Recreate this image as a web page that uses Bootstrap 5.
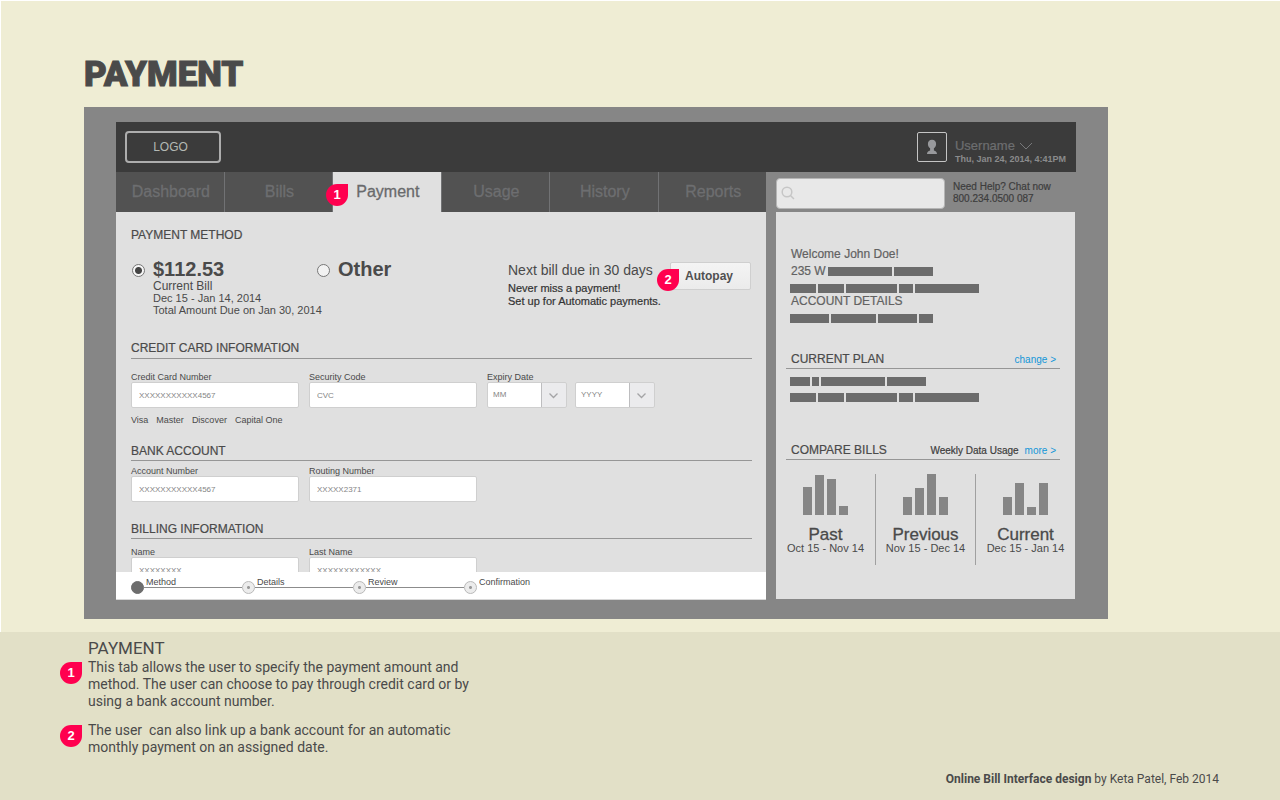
<!DOCTYPE html>
<html lang="en">
<head>
<meta charset="utf-8">
<meta name="viewport" content="width=device-width, initial-scale=1">
<title>Online Bill Interface – Payment</title>
<link href="https://cdn.jsdelivr.net/npm/bootstrap@5.3.0/dist/css/bootstrap.min.css" rel="stylesheet">
<style>
  :root { --ink:#4a4a4a; --panel:#e0e0e0; --frame:#868686; --pin:#ff004f; --rule:#969696; --sans:"Liberation Sans", Arial, sans-serif; --din:Roboto, "Open Sans", sans-serif; }
  body { font-family:var(--sans); font-size:12px; line-height:16px; color:var(--ink); background:#e2e0c7; }
  h1,h2,h3,p,ul,ol { margin:0; padding:0; }
  h1,h2,h3 { color:inherit; }
  ul,ol { list-style:none; }
  .stage { background:#efedd4; border-top:1px solid #fff; border-left:1px solid #fff; padding:54px 172px 13px 83px; }
  .page-title { font:900 35px/40px var(--din); margin-bottom:12px; -webkit-text-stroke:1px; }
  .frame { background:var(--frame); padding:15px 32px 19px; }
  .topbar { background:#3b3b3b; height:50px; padding:0 10px 0 9px; }
  .logo-box { width:96px; height:32px; border:2px solid #adadad; border-radius:4px; color:#b4b9b4; font-size:12px; line-height:29px; text-align:center; padding-right:5px; text-decoration:none; }
  .avatar { width:30px; height:30px; border:1px solid #c4c4c4; border-radius:2px; }
  .user-info { padding-top:10px; }
  .user-menu { color:#6d6e70; font-size:13px; line-height:14px; border:0; background:none; padding:0; text-align:left; -webkit-text-stroke:.2px; }
  .user-time { color:#8a8b8c; font-size:9px; font-weight:700; line-height:13px; }
  .workspace { display:grid; grid-template-columns:minmax(0,1fr) 300px; column-gap:10px; }
  .tabs { height:40px; background:#525252; }
  .tabs .nav-item + .nav-item { border-left:1px solid #717274; }
  .tabs .nav-link { color:#6d6e70; font-size:16px; line-height:39px; padding:0 0 0 2px; height:40px; border-radius:0; -webkit-text-stroke:.3px; }
  .tabs .nav-link.active { background:var(--panel); color:#696a6c; }
  .pin { width:22px; height:22px; border-radius:50% 0 50% 50%; background:var(--pin); color:#fff; font:700 13px/21px var(--sans); text-align:center; }
  .pin-tab { position:absolute; left:-7px; top:12px; z-index:2; }
  .pin-btn { position:absolute; left:-13px; top:7px; }
  .form-pane { background:var(--panel); max-height:360px; overflow:hidden; padding:13px 14px 0 15px; }
  .group-title { font-size:12px; line-height:20px; font-weight:400; -webkit-text-stroke:.2px; }
  .ruled { border-bottom:1px solid var(--rule); }
  .options { margin:13px 1px 22px 0; }
  .pay-choice { width:185px; }
  .pay-choice .form-check-input { float:none; width:13px; height:13px; margin:6px 0 0 1px; border:1px solid #777; background:#f2f2f2; flex:none; }
  .pay-choice .form-check-input:checked { background:radial-gradient(circle,#444 0 3px,#f6f6f6 4px); }
  .amount { font-size:20px; font-weight:700; line-height:22px; display:block; }
  .info { font-size:11px; line-height:12px; white-space:nowrap; }
  .due-note { width:162px; white-space:nowrap; }
  .due { font-size:14px; line-height:24px; }
  .due-hint { font-size:11px; line-height:13px; color:#333; -webkit-text-stroke:.2px; }
  .autopay { width:81px; height:28px; padding:0 3px 0 0; border:1px solid #cfcfcf; border-radius:2px; background:linear-gradient(#f4f4f4,#ebebeb); color:#505050; font-size:12px; font-weight:700; line-height:26px; }
  .tag { font-size:9px; line-height:10px; display:block; margin:0; white-space:nowrap; }
  .fields { gap:10px; }
  .fields-card { margin-top:13px; }
  .fields-bank { margin-top:5px; }
  .brands { margin-top:7px; }
  .tight { line-height:17px; margin-top:18px; }
  .tight-wide { line-height:17px; margin-top:19px; }
  .box.form-control { width:168px; height:26px; padding:0 7px; border:1px solid #cfcfcf; border-radius:2px; font-size:8px; line-height:24px; color:#858585; background:#fff; }
  .pick { width:80px; height:26px; border:1px solid #cfcfcf; border-radius:2px; font-size:8px; line-height:24px; color:#858585; padding:0 5px; appearance:none;
    background:url("data:image/svg+xml,%3Csvg xmlns='http://www.w3.org/2000/svg' width='25' height='24'%3E%3Cpath fill='%23ebebed' d='M0 0h25v24H0z'/%3E%3Cpath fill='none' stroke='%23bdbdbf' d='M.5 0v24'/%3E%3Cpath fill='none' stroke='%23a4a4a6' stroke-width='1.3' d='M8.500 10.500l4 4 4-4'/%3E%3C/svg%3E") right center no-repeat #fff; }
  .stepper { background:#fff; height:28px; padding:0 15px; border-bottom:1px solid #d8d8d8; }
  .step { width:111px; position:relative; display:flex; align-items:flex-start; font-size:9px; }
  .step:last-child { width:auto; }
  .step:not(:last-child)::after { content:""; position:absolute; left:13px; right:0; top:15px; height:1px; background:#8c8c8c; }
  .dot { width:13px; height:13px; margin-top:9px; border:1px solid #b9b9b9; border-radius:50%; background:radial-gradient(circle,#999 0 1px,#ececec 2px); flex:none; }
  .dot.on { background:#6d6d6d; border-color:#6d6d6d; }
  .step-name { line-height:10px; margin:5px 0 0 2px; }
  .search { position:relative; width:169px; padding-top:6px; }
  .search .form-control { height:31px; background:#e8e8e8; border:1px solid #b5b5b5; border-radius:4px; padding:0 8px 0 24px; font-size:12px; }
  .search svg { position:absolute; left:5px; top:14px; }
  .help { font-size:10px; line-height:12px; color:#3d3d3d; padding-top:9px; white-space:nowrap; -webkit-text-stroke:.2px; }
  .side-wrap { padding:0 1px 1px 0; }
  .side { background:var(--panel); height:100%; padding:34px 0 0 10px; }
  .side-text { line-height:17px; color:#626262; padding-left:5px; -webkit-text-stroke:.2px; }
  .blocks { gap:2px; height:9px; }
  .blocks i { height:9px; background:#6c6c6c; }
  .after-name { margin-left:2px; }
  .plan-row { margin:7px 0 0 4px; }
  .side a { color:#1296d8; text-decoration:none; font-size:10px; line-height:14px; }
  .side-head { margin-right:15px; padding:3px 4px 0 5px; height:19px; }
  .plan-head { margin-top:27px; }
  .compare-head { margin-top:39px; }
  .usage { font-size:10px; line-height:14px; color:#3d3d3d; margin-right:6px; -webkit-text-stroke:.2px; }
  .compare { margin:14px 0 0 -10px; }
  .compare > div { height:91px; text-align:center; }
  .compare > div + div { border-left:1px solid #a0a0a0; }
  .bars { height:41px; gap:3px; }
  .bars i { width:9px; background:#868686; }
  .period { font-size:17px; line-height:14px; font-weight:400; padding-top:13px; -webkit-text-stroke:.3px; }
  .notes { font-family:var(--din); font-size:14px; line-height:17px; padding:6px 61px 12px 60px; }
  .notes h2 { font-size:17px; line-height:21px; font-weight:400; padding-left:28px; }
  .note { gap:6px; max-width:420px; }
  .note .pin { flex:none; margin-top:3px; }
  .credit { font-size:12px; line-height:18px; text-align:right; margin-top:14px; }
</style>
</head>
<body>
<main class="stage">
  <h1 class="page-title">PAYMENT</h1>
  <div class="frame">
    <header class="topbar d-flex align-items-center justify-content-between">
      <a href="#" class="logo-box">LOGO</a>
      <div class="d-flex align-items-center gap-2">
        <span class="avatar d-flex align-items-center justify-content-center">
          <svg width="12" height="16" viewBox="0 0 12 16" fill="#98999c" aria-hidden="true"><path d="M6 .8C3.300.8 1.900 2.500 1.900 4.900c0 1.900.8 3.300 2.200 4.300v2.200C2.200 12 1 12.700 1 15h10c0-2.300-1.200-3-3.100-3.600V9.200c1.400-1 2.200-2.400 2.200-4.300C10.100 2.500 8.700.8 6 .8z"/></svg>
        </span>
        <div class="user-info">
          <button type="button" class="user-menu d-block">Username <svg width="14" height="8" viewBox="0 0 14 8" fill="none" stroke="#77787a" aria-hidden="true"><path d="M1 1l6 6 6-6"/></svg></button>
          <div class="user-time">Thu, Jan 24, 2014, 4:41PM</div>
        </div>
      </div>
    </header>
    <div class="workspace">
      <nav aria-label="Sections">
        <ul class="tabs nav nav-fill flex-nowrap">
          <li class="nav-item w-100"><a class="nav-link" href="#">Dashboard</a></li>
          <li class="nav-item w-100"><a class="nav-link" href="#">Bills</a></li>
          <li class="nav-item w-100 position-relative"><a class="nav-link active" aria-current="page" href="#">Payment</a><span class="pin pin-tab">1</span></li>
          <li class="nav-item w-100"><a class="nav-link" href="#">Usage</a></li>
          <li class="nav-item w-100"><a class="nav-link" href="#">History</a></li>
          <li class="nav-item w-100"><a class="nav-link" href="#">Reports</a></li>
        </ul>
      </nav>
      <div class="d-flex gap-2">
        <div class="search">
          <input type="search" class="form-control" aria-label="Search">
          <svg width="14" height="14" viewBox="0 0 14 14" fill="none" stroke="#c6c6c6" stroke-width="1.500" aria-hidden="true"><circle cx="6" cy="6" r="4.800"/><path d="M9.500 9.500L13 13"/></svg>
        </div>
        <div class="help">Need Help? Chat now<br>800.234.0500 087</div>
      </div>
      <section class="d-flex flex-column">
        <form class="form-pane">
          <h2 class="group-title">PAYMENT METHOD</h2>
          <div class="options d-flex justify-content-between">
            <div class="d-flex">
              <div class="pay-choice d-flex gap-2">
                <input class="form-check-input" type="radio" name="amount" id="bill" checked>
                <label for="bill"><span class="amount">$112.53</span><span class="d-block lh-1">Current Bill</span><span class="info d-block">Dec 15 - Jan 14, 2014<br>Total Amount Due on Jan 30, 2014</span></label>
              </div>
              <div class="pay-choice d-flex gap-2">
                <input class="form-check-input" type="radio" name="amount" id="other">
                <label for="other"><span class="amount">Other</span></label>
              </div>
            </div>
            <div class="d-flex">
              <div class="due-note"><div class="due">Next bill due in 30 days</div><p class="due-hint">Never miss a payment!<br>Set up for Automatic payments.</p></div>
              <div class="position-relative mt-1"><button type="button" class="autopay">Autopay</button><span class="pin pin-btn">2</span></div>
            </div>
          </div>
          <h2 class="group-title ruled">CREDIT CARD INFORMATION</h2>
          <div class="fields fields-card d-flex">
            <div><label class="tag" for="card">Credit Card Number</label><input class="form-control box" id="card" value="XXXXXXXXXXX4567"></div>
            <div><label class="tag" for="cvc">Security Code</label><input class="form-control box" id="cvc" value="CVC"></div>
            <div><label class="tag" for="mm">Expiry Date</label><div class="d-flex gap-2"><select class="pick" id="mm"><option>MM</option></select><select class="pick" aria-label="Expiry year"><option>YYYY</option></select></div></div>
          </div>
          <ul class="brands d-flex gap-2 tag"><li>Visa</li><li>Master</li><li>Discover</li><li>Capital One</li></ul>
          <h2 class="group-title ruled tight">BANK ACCOUNT</h2>
          <div class="fields fields-bank d-flex">
            <div><label class="tag" for="acct">Account Number</label><input class="form-control box" id="acct" value="XXXXXXXXXXX4567"></div>
            <div><label class="tag" for="routing">Routing Number</label><input class="form-control box" id="routing" value="XXXXX2371"></div>
          </div>
          <h2 class="group-title ruled tight-wide">BILLING INFORMATION</h2>
          <div class="fields d-flex mt-2">
            <div><label class="tag" for="fname">Name</label><input class="form-control box" id="fname" value="XXXXXXXX"></div>
            <div><label class="tag" for="lname">Last Name</label><input class="form-control box" id="lname" value="XXXXXXXXXXXX"></div>
          </div>
        </form>
        <ol class="stepper d-flex">
          <li class="step" aria-current="step"><span class="dot on"></span><span class="step-name">Method</span></li>
          <li class="step"><span class="dot"></span><span class="step-name">Details</span></li>
          <li class="step"><span class="dot"></span><span class="step-name">Review</span></li>
          <li class="step"><span class="dot"></span><span class="step-name">Confirmation</span></li>
        </ol>
      </section>
      <aside class="side-wrap">
        <div class="side">
          <div class="side-text">Welcome John Doe!</div>
          <div class="side-text d-flex align-items-center">235 W<div class="blocks after-name d-flex"><i style="width:64px"></i><i style="width:39px"></i></div></div>
          <div class="blocks d-flex ms-1 mt-1"><i style="width:26px"></i><i style="width:26px"></i><i style="width:51px"></i><i style="width:14px"></i><i style="width:64px"></i></div>
          <div class="side-text">ACCOUNT DETAILS</div>
          <div class="blocks d-flex ms-1 mt-1"><i style="width:39px"></i><i style="width:45px"></i><i style="width:39px"></i><i style="width:14px"></i></div>
          <div class="side-head plan-head ruled d-flex justify-content-between"><h2 class="group-title lh-1">CURRENT PLAN</h2><a href="#">change &gt;</a></div>
          <div class="blocks d-flex ms-1 mt-2"><i style="width:20px"></i><i style="width:7px"></i><i style="width:64px"></i><i style="width:39px"></i></div>
          <div class="blocks plan-row d-flex"><i style="width:26px"></i><i style="width:26px"></i><i style="width:51px"></i><i style="width:14px"></i><i style="width:64px"></i></div>
          <div class="side-head compare-head ruled d-flex"><h2 class="group-title lh-1 me-auto">COMPARE BILLS</h2><span class="usage">Weekly Data Usage</span><a href="#">more &gt;</a></div>
          <div class="compare row g-0">
            <div class="col"><div class="bars d-flex align-items-end justify-content-center"><i style="height:28px"></i><i style="height:40px"></i><i style="height:36px"></i><i style="height:9px"></i></div><h3 class="period">Past</h3><div class="info">Oct 15 - Nov 14</div></div>
            <div class="col"><div class="bars d-flex align-items-end justify-content-center"><i style="height:18px"></i><i style="height:27px"></i><i style="height:41px"></i><i style="height:18px"></i></div><h3 class="period">Previous</h3><div class="info">Nov 15 - Dec 14</div></div>
            <div class="col"><div class="bars d-flex align-items-end justify-content-center"><i style="height:18px"></i><i style="height:32px"></i><i style="height:8px"></i><i style="height:32px"></i></div><h3 class="period">Current</h3><div class="info">Dec 15 - Jan 14</div></div>
          </div>
        </div>
      </aside>
    </div>
  </div>
</main>
<section class="notes">
  <h2>PAYMENT</h2>
  <div class="note d-flex"><span class="pin">1</span><p>This tab allows the user to specify the payment amount and method. The user can choose to pay through credit card or by using a bank account number.</p></div>
  <div class="note d-flex mt-2 pt-1"><span class="pin">2</span><p>The user&nbsp; can also link up a bank account for an automatic monthly payment on an assigned date.</p></div>
  <footer class="credit"><b>Online Bill Interface design</b> by Keta Patel, Feb 2014</footer>
</section>
<script src="https://cdn.jsdelivr.net/npm/bootstrap@5.3.0/dist/js/bootstrap.bundle.min.js"></script>
</body>
</html>
